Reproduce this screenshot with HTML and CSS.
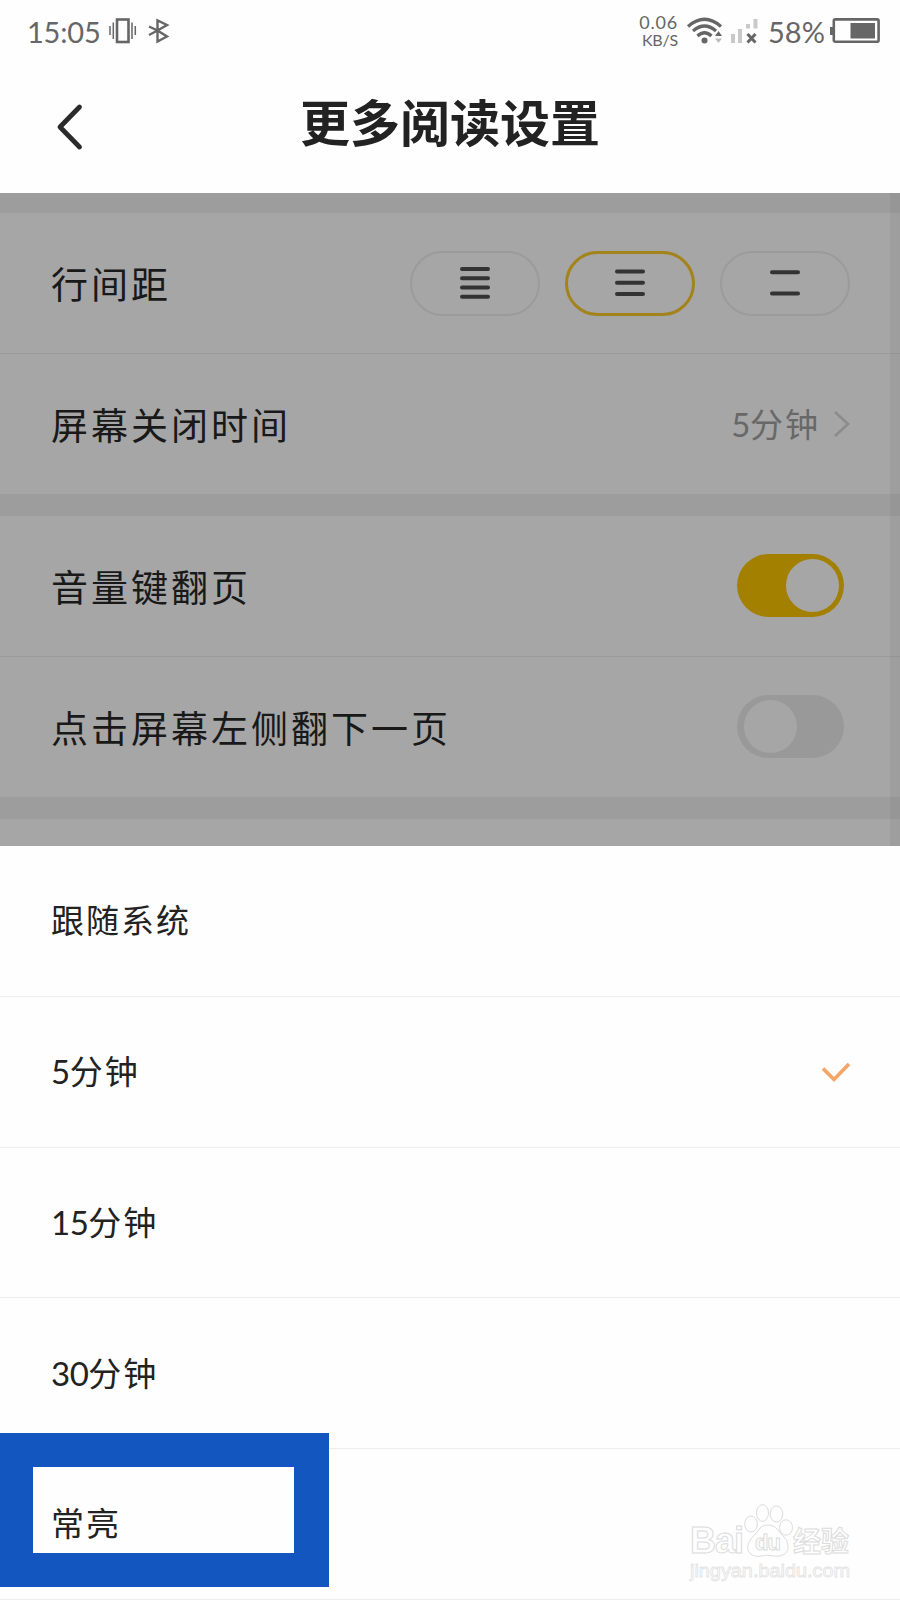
FILE: index.html
```html
<!DOCTYPE html>
<html lang="zh-CN">
<head>
    <meta charset="UTF-8">
    <meta name="viewport" content="width=device-width, initial-scale=1.0">
    <title>更多阅读设置</title>
    <link rel="stylesheet" href="styles.css">
</head>
<body>
    <div class="phone">
        <div class="status-bar">
            <div class="status-left">
                <span class="status-text time">15:05</span>
                <svg class="vibrate" width="28" height="26" viewBox="0 0 28 26" fill="none" stroke="#666">
                    <rect x="8" y="1.5" width="11.5" height="22.5" stroke-width="2.6"/>
                    <path d="M1 8v9M4.3 4.5v16.5M23 4.5v16.5M26.3 8v9" stroke-width="1.5"/>
                </svg>
                <svg class="bluetooth" width="22" height="26" viewBox="0 0 22 26" fill="none" stroke="#666" stroke-width="2.4">
                    <path d="M1 8.5L9.5 12.5L19 18.5L9.5 23.5V2.5L19 7L9.5 12.5L1 17"/>
                </svg>
            </div>
            <div class="status-right">
                <div class="speed">
                    <span>0.06</span>
                    <span class="unit">KB/S</span>
                </div>
                <svg class="wifi" width="36" height="28" viewBox="0 0 36 28" fill="none" stroke="#666" stroke-width="3.3">
                    <path d="M1 9.5Q17.5 -5 34 9.5M6 14Q17.5 4 29 14M10.5 19Q17.5 12.5 24.5 19"/>
                    <circle cx="17.5" cy="23.5" r="3" fill="#666" stroke="none"/>
                    <path d="M28 19L31.5 14L35 19Z" fill="#666" stroke="none"/>
                    <path d="M28 21.5L31.5 26L35 21.5Z" fill="#bbb" stroke="none"/>
                </svg>
                <svg class="signal" width="28" height="27" viewBox="0 0 28 27">
                    <path d="M2 26V17M9 26V12M17 11.5V7M24.5 11.5V2" stroke="#c9c9c9" stroke-width="4" fill="none"/>
                    <path d="M16.5 17L24.5 25.5M24.5 17L16.5 25.5" stroke="#666" stroke-width="3" fill="none"/>
                </svg>
                <span class="status-text percent">58%</span>
                <svg class="battery" width="50" height="26" viewBox="0 0 50 26">
                    <rect x="3.8" y="1.4" width="44.8" height="22.4" rx="1.5" fill="none" stroke="#666" stroke-width="2.6"/>
                    <rect x="0" y="9" width="4" height="8" fill="#666"/>
                    <rect x="20.5" y="5" width="24.5" height="15.5" fill="#666"/>
                </svg>
            </div>
        </div>

        <div class="header">
            <svg class="back" width="28" height="48" viewBox="0 0 28 48" fill="none" stroke="#2b2b2b" stroke-width="4.8" stroke-linecap="round" stroke-linejoin="round">
                <path d="M23.5 4L4 24L23.5 44"/>
            </svg>
            <h1>更多阅读设置</h1>
        </div>

        <div class="settings">
            <div class="band first"></div>
            <div class="row">
                <span class="label">行间距</span>
                <div class="spacing">
                    <div class="pill"><svg width="32" height="34"><path d="M3 3h26M3 12.2h26M3 21.5h26M3 30.7h26"/></svg></div>
                    <div class="pill active"><svg width="32" height="34"><path d="M3 5.5h26M3 16.8h26M3 28.1h26"/></svg></div>
                    <div class="pill"><svg width="32" height="34"><path d="M3 6.2h26M3 27.6h26"/></svg></div>
                </div>
            </div>
            <div class="row last">
                <span class="label">屏幕关闭时间</span>
                <div class="value">
                    <span><b class="num">5</b>分钟</span>
                    <svg width="18" height="28" viewBox="0 0 18 28" fill="none" stroke="#8c8c8c" stroke-width="2.6"><path d="M3 2L16 14L3 26"/></svg>
                </div>
            </div>
            <div class="band"></div>
            <div class="row">
                <span class="label">音量键翻页</span>
                <div class="switch on"><i></i></div>
            </div>
            <div class="row last">
                <span class="label">点击屏幕左侧翻下一页</span>
                <div class="switch"><i></i></div>
            </div>
            <div class="band"></div>
            <div class="scroll-track"></div>
        </div>

        <div class="sheet">
            <div class="option">跟随系统</div>
            <div class="option">
                <span><b class="num">5</b>分钟</span>
                <svg width="30" height="22" viewBox="0 0 30 22" fill="none" stroke="#f5a468" stroke-width="3.6"><path d="M3 7.5L14 18.5L29 3"/></svg>
            </div>
            <div class="option"><span><b class="num">15</b>分钟</span></div>
            <div class="option"><span><b class="num">30</b>分钟</span></div>
            <div class="option">常亮</div>
            <div class="highlight"></div>
            <svg class="watermark" width="170" height="84" viewBox="0 0 170 84">
                <text class="brand" x="1" y="51" font-size="36" textLength="54">Bai</text>
                <ellipse cx="62" cy="22" rx="6.3" ry="8"/>
                <ellipse cx="73.5" cy="11" rx="6" ry="8.3"/>
                <ellipse cx="87.5" cy="12" rx="6.3" ry="8"/>
                <ellipse cx="97" cy="25.5" rx="6.5" ry="7.7"/>
                <path d="M79 23C87 23 90 30 95 35C101 41 101 53 90 54C84 55 80 52 73 54C62 56 56 49 60 40C63 34 68 32 71 26C73 24 76 23 79 23Z"/>
                <text class="brand" x="66" y="48" font-size="22" textLength="26">du</text>
                <text class="brand" x="104" y="50" font-size="28" textLength="56">经验</text>
                <text class="site" x="1" y="75" font-size="18" textLength="160" lengthAdjust="spacingAndGlyphs">jingyan.baidu.com</text>
            </svg>
        </div>
    </div>
</body>
</html>
```

FILE: styles.css
```css
* {
    box-sizing: border-box;
}

body {
    margin: 0;
    background: #fefefe;
    color: #222;
    font-family: "Noto Sans", "Noto Sans CJK SC", sans-serif;
}

svg {
    display: block;
    flex-shrink: 0;
}

.phone {
    width: 900px;
    height: 1600px;
    overflow: hidden;
    background: #fefefe;
}

/* status bar */
.status-bar {
    height: 62px;
    padding: 14px 20px 0 27px;
    display: flex;
    justify-content: space-between;
}

.status-left, .status-right {
    display: flex;
    align-items: flex-start;
    color: #666;
}

.status-text {
    font-family: Lato, sans-serif;
    font-size: 29px;
    line-height: 36px;
}

.time {
    width: 82px;
    letter-spacing: -0.2px;
}

.vibrate {
    margin-top: 4px;
}

.bluetooth {
    margin: 4px 0 0 11px;
}

.speed {
    display: flex;
    flex-direction: column;
    align-items: flex-end;
    margin-top: -1px;
    margin-right: 9px;
    font-family: Lato, sans-serif;
    font-size: 18px;
    line-height: 18px;
    letter-spacing: 0.8px;
}

.speed .unit {
    font-size: 16px;
    line-height: 18px;
    letter-spacing: -0.2px;
}

.wifi {
    margin-top: 3px;
    margin-right: 8px;
}

.signal {
    margin-top: 3px;
    margin-right: 9px;
}

.percent {
    width: 62px;
}

.battery {
    margin-top: 4px;
}

/* title */
.header {
    height: 131px;
    padding-left: 56px;
    display: grid;
    grid-template-columns: 28px 1fr 84px;
}

.back {
    margin-top: 41px;
}

.header h1 {
    margin: 0;
    padding-top: 22px;
    line-height: 72px;
    font-family: "Noto Sans CJK SC", sans-serif;
    font-size: 50px;
    font-weight: bold;
    text-align: center;
}

/* dimmed settings list */
.settings {
    position: relative;
    height: 653px;
    background: #a6a6a6;
    color: #191919;
}

.band {
    height: 22px;
    background: #9d9d9d;
}

.band.first {
    height: 20px;
}

.row {
    height: 141px;
    padding: 0 50px 0 51px;
    display: flex;
    align-items: center;
    justify-content: space-between;
    border-bottom: 1px solid #9b9b9b;
}

.row.last {
    height: 140px;
    border-bottom: none;
}

.label {
    padding-bottom: 1px;
    font-family: "Noto Sans CJK SC", sans-serif;
    font-size: 37px;
    line-height: 50px;
    letter-spacing: 3px;
}

.spacing {
    display: flex;
    gap: 25px;
}

.pill {
    width: 130px;
    height: 65px;
    border: 2px solid #9b9b9b;
    border-radius: 33px;
    display: flex;
    align-items: center;
    justify-content: center;
}

.pill.active {
    border: 3px solid #a3831c;
}

.pill svg {
    fill: none;
    stroke: #333;
    stroke-width: 4;
    stroke-linecap: round;
}

.value {
    display: flex;
    align-items: center;
    gap: 12px;
    font-size: 33px;
    line-height: 50px;
    letter-spacing: 2px;
    color: #686868;
}

.num {
    font-family: Lato, sans-serif;
    font-weight: normal;
    letter-spacing: -0.5px;
}

.switch {
    width: 107px;
    height: 63px;
    margin: 0 6px 2px 0;
    padding: 5px 7px;
    border-radius: 32px;
    background: #999;
}

.switch i {
    display: block;
    width: 53px;
    height: 53px;
    border-radius: 50%;
    background: #a6a6a6;
}

.switch.on {
    padding-right: 5px;
    background: #a38000;
}

.switch.on i {
    margin-left: auto;
}

.scroll-track {
    position: absolute;
    top: 0;
    right: 0;
    width: 10px;
    height: 100%;
    background: rgba(0, 0, 0, 0.045);
}

/* bottom sheet */
.sheet {
    position: relative;
    height: 754px;
    display: grid;
    grid-template-rows: repeat(5, 1fr);
    background: #fefefe;
}

.option {
    padding: 0 50px 0 51px;
    display: flex;
    align-items: center;
    justify-content: space-between;
    border-bottom: 1px solid #ededed;
    font-size: 33px;
    line-height: 50px;
    letter-spacing: 2px;
}

.highlight {
    position: absolute;
    left: 0;
    top: 587px;
    width: 329px;
    height: 154px;
    border: solid #1456c0;
    border-width: 34px 35px 34px 33px;
}

.watermark {
    position: absolute;
    left: 689px;
    top: 656px;
    fill: #fefefe;
    stroke: #dcdcdc;
    stroke-width: 1;
}

.watermark .brand {
    font-family: "Liberation Sans", "Noto Sans CJK SC", sans-serif;
    font-weight: bold;
}

.watermark .site {
    font-family: "Liberation Sans", sans-serif;
    stroke: #e4e4e4;
    stroke-width: 0.8;
}
```
